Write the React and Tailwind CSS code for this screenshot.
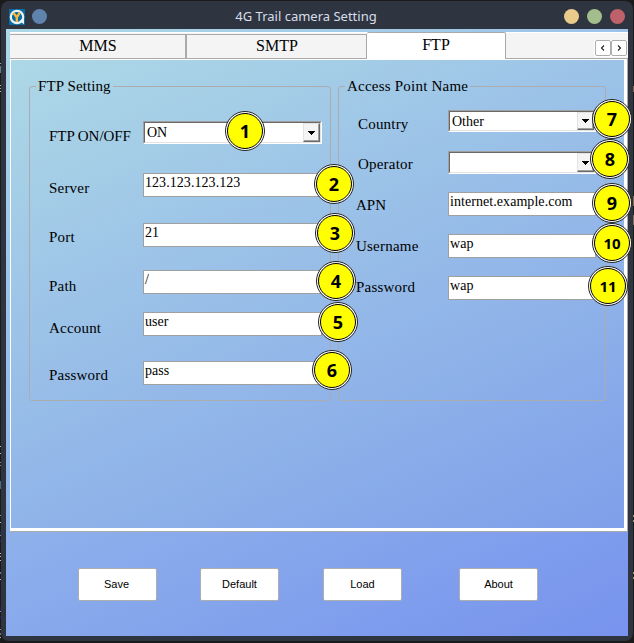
import React from "react";

const leftRows = [
  { label: "FTP ON/OFF", value: "ON", combo: true, row: "mt-[26px] h-[23px]", pt: "pt-[5px] tracking-[-0.05px]" },
  { label: "Server", value: "123.123.123.123", row: "mt-[29px] h-6", pt: "pt-[5px] tracking-[0.2px]" },
  { label: "Port", value: "21", row: "mt-[26px] h-6", pt: "pt-1 tracking-[0.2px]" },
  { label: "Path", value: "/", row: "mt-[23px] h-6", pt: "pt-[6px] tracking-[0.2px]" },
  { label: "Account", value: "user", row: "mt-[18px] h-6", pt: "pt-[6px] tracking-[0.2px]" },
  { label: "Password", value: "pass", row: "mt-[25px] h-6", pt: "pt-1 tracking-[0.2px]" },
];

const rightRows = [
  { label: "Country", value: "Other", combo: true, row: "mt-[15px] h-[22px]", pt: "pt-1 pl-[2px] tracking-[0.2px]" },
  { label: "Operator", value: "", combo: true, row: "mt-[19px] h-[23px]", pt: "pt-[3px] pl-[2px] tracking-[0.2px]" },
  { label: "APN", value: "internet.example.com", row: "mt-[18px] h-6", pt: "pt-[3px]" },
  { label: "Username", value: "wap", row: "mt-[18px] h-6", pt: "pt-[2px] tracking-[0.22px]" },
  { label: "Password", value: "wap", row: "mt-[18px] h-6", pt: "pt-[1px] tracking-[0.22px]" },
];

const badges = [
  [245, 131], [334, 184], [335, 233], [336, 281], [338, 322], [332, 370],
  [612, 119], [610, 159], [612, 203], [612, 243], [608, 286],
];

// Slivers of the desktop visible on either side of the window: [x, y, height, colour]
const slivers = [
  [0, 63, 1, "#aaa"], [0, 66, 7, "#5a8088"], [0, 85, 1, "#bbb"], [0, 88, 1, "#999"], [0, 91, 1, "#bbb"],
  [0, 446, 1, "#bbb"], [0, 453, 1, "#bbb"], [0, 462, 1, "#a47b55"], [0, 465, 1, "#a47b55"], [0, 481, 8, "#3f6d8a"],
  [0, 515, 1, "#999"], [0, 522, 1, "#bbb"], [0, 531, 3, "#1c2460"], [0, 535, 1, "#88a"], [0, 540, 2, "#1c2460"],
  [0, 553, 1, "#bbb"], [0, 556, 1, "#bbb"], [0, 560, 1, "#bbb"], [0, 572, 2, "#5a8088"], [0, 579, 1, "#bbb"],
  [0, 607, 3, "#1c2460"], [0, 611, 1, "#99a"], [0, 616, 2, "#1c2460"], [0, 629, 1, "#99a"], [0, 633, 2, "#678"], [0, 637, 1, "#bbb"],
  [633, 86, 6, "#8a5a44"], [633, 196, 10, "#8a6a50"], [633, 215, 10, "#8a6a50"],
  [633, 515, 2, "#a89070"], [633, 520, 2, "#a89070"], [633, 572, 2, "#a89070"], [633, 577, 2, "#a89070"],
];

function Combo({ value, width }) {
  return (
    <div className={`${width} h-full shrink-0 border border-t-[#a0a0a0] border-l-[#a0a0a0] border-r-white border-b-white`}>
      <div className="flex h-full border border-t-[#696969] border-l-[#696969] border-r-[#e3e3e3] border-b-[#e3e3e3] bg-white">
        <span className="flex-1 pl-[2px] text-[14px] leading-[19px]"><span className="block h-0">{value}</span></span>
        <div className="flex w-[17px] items-center justify-center border border-t-[#e3e3e3] border-l-[#e3e3e3] border-r-[#696969] border-b-[#696969] bg-[#f4f4f4] shadow-[inset_-1px_-1px_0_#a0a0a0]">
          <svg width="7" height="4" viewBox="0 0 7 4" shapeRendering="crispEdges">
            <path d="M0 0h7v1h-1v1h-1v1h-1v1h-1v-1h-1v-1h-1v-1h-1z" />
          </svg>
        </div>
      </div>
    </div>
  );
}

function Group({ title, rows, box, legend, labelWidth, fieldWidth }) {
  return (
    <fieldset className={`${box} h-[324px] shrink-0 rounded-[3px] border border-[#aaacae]`}>
      <legend className={`${legend} h-[18px] px-[2px] text-[15px] leading-[18px]`}>{title}</legend>
      {rows.map((r) => (
        <div key={r.label} className={`flex items-start ${r.row}`}>
          <div className={`${labelWidth} ${r.pt} shrink-0 text-[15px] leading-5`}>{r.label}</div>
          {r.combo ? (
            <Combo value={r.value} width={fieldWidth} />
          ) : (
            <div className={`${fieldWidth} h-6 shrink-0 border border-[#a0a0a0] bg-white pl-px text-[14px] leading-[17px] tracking-[0.06px]`}>{r.value}</div>
          )}
        </div>
      ))}
    </fieldset>
  );
}

function Logo() {
  return (
    <svg width="16" height="16" viewBox="0 0 16 16">
      <rect width="16" height="16" fill="#086ca2" />
      <circle cx="8" cy="8" r="6.2" fill="none" stroke="#e9f2f5" strokeWidth="2.2" />
      <path d="M10.5 12l4.5 3.2V9z" fill="#e9f2f5" />
      <path d="M4.3 3.6L7.8 8.4L10.8 3.6M7.8 8V13" fill="none" stroke="#f4b63c" strokeWidth="2.4" />
    </svg>
  );
}

function Arrow({ d }) {
  return (
    <div className="flex h-4 w-4 items-center justify-center rounded-[2px] border border-[#aeaeae] bg-white">
      <svg width="6" height="6" viewBox="0 0 6 6" fill="none" stroke="#222" strokeWidth="1.1"><path d={d} /></svg>
    </div>
  );
}

export default function App() {
  return (
    <div className="relative h-[643px] w-[634px] overflow-hidden bg-[#1b1b1c] p-px pb-[2px] font-['Liberation_Serif',serif] text-black">
      {slivers.map(([x, y, h, c]) => (
        <div key={`${x}-${y}`} className="absolute w-px" style={{ left: x, top: y, height: h, background: c }} />
      ))}
      <div className="flex h-[640px] w-[632px] flex-col rounded-[8px] bg-[#2e3440] px-[5px]">
        <div className="flex h-7 shrink-0 items-center pl-[3px] pr-[3px] pt-[3px]">
          <Logo />
          <div className="ml-[7px] h-[15px] w-[15px] rounded-full bg-[#6083ae]" />
          <div className="flex-1 pl-px text-center font-['Noto_Sans',sans-serif] text-[13px] leading-5 text-[#d8dee9]">
            <span className="relative -top-px">4G Trail camera Setting</span>
          </div>
          <div className="flex gap-2">
            <div className="h-[15px] w-[15px] rounded-full bg-[#ebcb8b]" />
            <div className="h-[15px] w-[15px] rounded-full bg-[#a3be8c]" />
            <div className="h-[15px] w-[15px] rounded-full bg-[#bf616a]" />
          </div>
        </div>

        <div className="h-[607px] w-[622px] bg-[linear-gradient(156deg,#add8e6_0%,#7793ee_100%)] pl-1 pt-[3px]">
          <div className="flex h-[27px] border-b border-t border-b-[#aaa] border-t-white bg-[#f4f4f4] text-[16px] leading-[22px]">
            <div className="mt-px w-[175px] border-t border-[#aaa] pl-px text-center">MMS</div>
            <div className="mt-px w-[182px] border-x border-t border-l-2 border-[#aaa] pl-px text-center">SMTP</div>
            <div className="-mb-px -mt-px w-[139px] rounded-t-[2px] border-r border-t border-[#aaa] bg-white pt-px text-center">FTP</div>
            <div className="flex flex-1 justify-end pr-px pt-[7px]">
              <div className="flex h-[17px] bg-white pl-px"><Arrow d="M4 .5L1.5 3L4 5.5" /><Arrow d="M2 .5L4.5 3L2 5.5" /></div>
            </div>
          </div>
          <div className="h-[473px] w-[618px] rounded-br-[2px] border-b border-r border-[#aaa] bg-white pb-[3px] pl-px pr-[3px] pt-px">
            <div className="flex h-[468px] w-[613px] bg-[linear-gradient(156deg,#add8e6_0%,#7f9fea_100%)] pl-[18px] pt-[17px]">
              <Group title="FTP Setting" rows={leftRows} box="w-[302px] pl-[19px]" legend="-ml-[13px] tracking-[0.1px]" labelWidth="w-[94px]" fieldWidth="w-[179px]" />
              <div className="w-[7px] shrink-0" />
              <Group title="Access Point Name" rows={rightRows} box="w-[268px] pl-[17px]" legend="-ml-[11px] tracking-[0.22px]" labelWidth="w-[92px]" fieldWidth="w-[148px]" />
            </div>
          </div>
          <div className="flex pl-[68px] pt-9 font-['Liberation_Sans',sans-serif] text-[11px]">
            <button className="mr-[43px] h-[33px] w-[79px] rounded-[2px] border border-[#aeaeae] bg-white pr-[2px]">Save</button>
            <button className="mr-11 h-[33px] w-[79px] rounded-[2px] border border-[#aeaeae] bg-white">Default</button>
            <button className="mr-[57px] h-[33px] w-[79px] rounded-[2px] border border-[#aeaeae] bg-white">Load</button>
            <button className="h-[33px] w-[79px] rounded-[2px] border border-[#aeaeae] bg-white">About</button>
          </div>
        </div>
      </div>

      {badges.map(([x, y], i) => (
        <div key={i} className="absolute h-10 w-10 rounded-full border border-[#222] bg-white p-px" style={{ left: x - 20, top: y - 20 }}>
          <div className={`flex h-full w-full items-center justify-center rounded-full border-[1.5px] border-black bg-[#ffff00] font-['Noto_Sans',sans-serif] font-bold ${i > 8 ? "text-[15px]" : "text-[18px]"}`}>
            {i + 1}
          </div>
        </div>
      ))}
    </div>
  );
}
